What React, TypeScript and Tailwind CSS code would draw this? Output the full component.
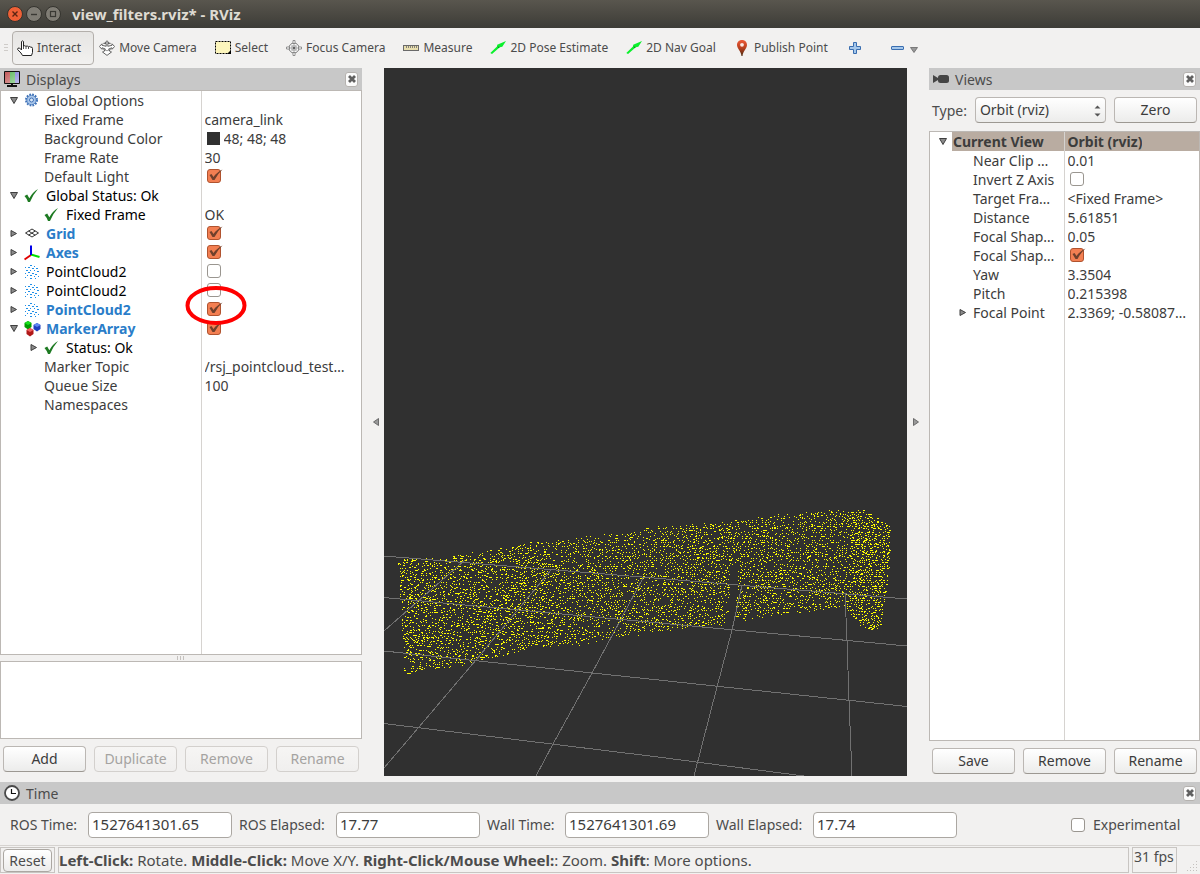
import { useState, type ReactNode } from "react";

/* ---------- icons ---------- */

function HandIcon() {
  return (
    <svg width="16" height="16" viewBox="0 0 16 16" className="shrink-0">
      <path
        d="M4.5 10V1.5Q5.5.2 6.5 1.5V6Q8 5.200 8.800 6.300Q10.500 5.500 11.300 6.800Q13 6 13.800 7.200Q15.500 6.800 15.500 8.500V12.500L14.500 15.500H5.500L4 13L.6 9.500Q.6 7.500 2.500 8Z"
        fill="#fff"
        stroke="#222"
      />
      <path d="M6.500 6V9M9 6.500V9M11.500 7V9" stroke="#222" strokeWidth=".8" />
    </svg>
  );
}

function MoveIcon() {
  return (
    <svg width="16" height="16" viewBox="0 0 16 16" fill="#fff" stroke="#555" strokeWidth=".9" className="shrink-0">
      <path d="M8 .7L10.500 3.500H8.800V6.300L13 5.300V3.800L15.600 6.500L13 9.300V7.800L9.600 9L11.400 12H12.500L8 15.400L3.500 12H4.600L6.400 9L3 7.800V9.300L.4 6.500L3 3.800V5.300L7.200 6.300V3.500H5.500Z" />
      <path d="M4 3.500Q8 1.500 12 3.500M4 9.500Q8 12 12 9.500" fill="none" strokeWidth=".6" />
    </svg>
  );
}

function SelectIcon() {
  return (
    <svg width="16" height="16" viewBox="0 0 16 16" className="shrink-0">
      <rect x=".5" y="1.500" width="15" height="12" fill="#fdf6bd" stroke="#000" strokeDasharray="2 1" />
      <path d="M16 10V14H12Z" fill="#000" />
    </svg>
  );
}

function FocusIcon() {
  return (
    <svg width="16" height="16" viewBox="0 0 16 16" fill="none" stroke="#7a7a7a" className="shrink-0">
      <circle cx="8" cy="8" r="5" fill="#f8f8f8" />
      <path d="M7 .5H9V3.500H7ZM7 12.500H9V15.500H7ZM.5 7V9H3.500V7ZM12.500 7V9H15.500V7Z" fill="#fff" strokeWidth=".8" />
      <path d="M3.500 8H12.500M8 3.500V12.500M5.500 6H10.500M5.500 10H10.500M6 5.500V10.500M10 5.500V10.500" strokeWidth=".6" />
      <circle cx="8" cy="8" r="1" fill="#444" stroke="none" />
    </svg>
  );
}

function RulerIcon() {
  return (
    <svg width="16" height="16" viewBox="0 0 16 16" className="shrink-0">
      <rect x=".5" y="5.500" width="15" height="5" fill="#e8deae" stroke="#6a6a6a" />
      <path d="M3.500 6V8M5.500 6V8M7.500 6V8M9.500 6V8M11.500 6V8M13.500 6V8" stroke="#6a6a6a" strokeWidth=".8" />
    </svg>
  );
}

function ArrowIcon() {
  return (
    <svg width="16" height="16" viewBox="0 0 16 16" className="shrink-0">
      <path d="M16 1L12.300 6.800L9.800 7.200L2 14L.3 13L7 6.400L7.200 4.800Z" fill="#0bf02c" />
      <path d="M7.400 6.400L9.800 6.900L8.600 8.100Z" fill="#067a18" />
    </svg>
  );
}

function PinIcon() {
  return (
    <svg width="16" height="16" viewBox="0 0 16 16" className="shrink-0">
      <defs>
        <linearGradient id="pin" x1="0" y1="0" x2="0" y2="1">
          <stop offset="0" stopColor="#ee5a38" />
          <stop offset=".5" stopColor="#b8401f" />
          <stop offset="1" stopColor="#4a2c10" />
        </linearGradient>
      </defs>
      <path d="M8 0C4.800 0 3 2.300 3 5C3 8.500 7 11 7.500 16H8.500C9 11 13 8.500 13 5C13 2.300 11.200 0 8 0Z" fill="url(#pin)" />
      <circle cx="8" cy="4.800" r="1.900" fill="#fbe9e4" />
    </svg>
  );
}

function PlusIcon() {
  return (
    <svg width="12" height="12" viewBox="0 0 12 12" className="shrink-0">
      <path d="M4.500.5H7.500V4.500H11.500V7.500H7.500V11.500H4.500V7.500H.5V4.500H4.500Z" fill="#a5c7ea" stroke="#3a6eb0" />
    </svg>
  );
}

function MinusIcon() {
  return (
    <svg width="13" height="12" viewBox="0 0 13 12" className="shrink-0">
      <rect x=".5" y="4.500" width="12" height="3" rx=".5" fill="#a5c7ea" stroke="#3a6eb0" />
    </svg>
  );
}

function MonitorIcon() {
  return (
    <svg width="16" height="16" viewBox="0 0 16 16" className="shrink-0">
      <defs>
        <linearGradient id="screen" x1="0" y1="0" x2="1" y2="1">
          <stop offset="0" stopColor="#fff" stopOpacity="0" />
          <stop offset="1" stopColor="#fff" stopOpacity=".5" />
        </linearGradient>
      </defs>
      <rect width="16" height="13" rx="1" fill="#111" />
      <path d="M1 1H6V12H1Z" fill="#c25a5a" />
      <path d="M6 1H11V12H6Z" fill="#5cb85c" />
      <path d="M11 1H15V12H11Z" fill="#7a78d8" />
      <path d="M1 1H15V12H1Z" fill="url(#screen)" />
      <path d="M7 13H9V14H13V16H3V14H7Z" fill="#111" />
    </svg>
  );
}

function CameraIcon() {
  return (
    <svg width="16" height="16" viewBox="0 0 16 16" fill="#444" className="shrink-0">
      <path d="M0 4L5 7V9L0 12Z" />
      <rect x="5" y="4" width="11" height="8" rx="2.500" />
    </svg>
  );
}

function ClockIcon() {
  return (
    <svg width="16" height="16" viewBox="0 0 16 16" fill="none" className="shrink-0">
      <circle cx="8" cy="8" r="7" fill="#fff" stroke="#4a4a4a" strokeWidth="1.800" />
      <path d="M7.500 4V8.500H12" stroke="#111" strokeWidth="1.200" />
    </svg>
  );
}

function GearIcon() {
  return (
    <svg width="16" height="16" viewBox="0 0 16 16" fill="none" className="shrink-0">
      <circle cx="7.500" cy="7" r="5.500" stroke="#3f72b8" strokeWidth="2" strokeDasharray="1.700 1.180" />
      <circle cx="7.500" cy="7" r="4.700" fill="#a9c6ea" stroke="#3f72b8" strokeWidth=".8" />
      <circle cx="7.500" cy="7" r="2" fill="#dbe8f7" stroke="#3f72b8" />
    </svg>
  );
}

function OkIcon() {
  return (
    <svg width="16" height="16" viewBox="0 0 16 16" className="shrink-0">
      <path d="M.5 8L3.200 6.500L5.300 10.200Q8.500 4.300 14 1Q9 6.500 6 14H4Q2.800 10.500 .5 8Z" fill="#1d7a22" />
    </svg>
  );
}

function GridIcon() {
  return (
    <svg width="16" height="16" viewBox="0 0 16 16" fill="none" stroke="#333" className="shrink-0">
      <path d="M1.500 7L8 3L14.500 7L8 11ZM4.500 5L11.200 9.200M4.500 9.200L11.200 5" />
    </svg>
  );
}

function AxesIcon() {
  return (
    <svg width="16" height="16" viewBox="0 0 16 16" fill="none" strokeWidth="2" className="shrink-0">
      <path d="M7 10L.5 14.500" stroke="#e00000" />
      <path d="M7 9.500L15.500 12" stroke="#00e000" />
      <path d="M7 10V.5" stroke="#0000e8" />
    </svg>
  );
}

function CloudIcon() {
  return (
    <svg width="16" height="16" viewBox="0 0 16 16" className="shrink-0" shapeRendering="crispEdges">
      <path
        d="M6 1.500h2M10 2.500h1M1 3.500h1M4 3.500h2M8 4.500h2M12 4.500h2M2 6.500h2M6 6.500h1M13 7.500h2M10 6.500h1M4 8.500h2M1 9.500h1M8 9.500h2M3 11.500h1M6 11.500h2M11 10.500h2M1 13.500h1M10 12.500h1M14 12.500h1M6 14.500h2M11 14.500h1"
        stroke="#1f8fe8"
        strokeWidth="1.500"
      />
    </svg>
  );
}

function MarkersIcon() {
  return (
    <svg width="18" height="16" viewBox="0 0 18 16" className="shrink-0">
      <path d="M4 0L7.500 2V6L4 8.500L.5 6V2Z" fill="#009c00" />
      <path d="M4 0L7.500 2L4 4L.5 2Z" fill="#19e01e" />
      <path d="M13 2L16.500 4V8L13 10.500L9.500 8V4Z" fill="#1f3fc0" />
      <path d="M13 2L16.500 4L13 6L9.500 4Z" fill="#5f86f2" />
      <path d="M6 7L9.500 9V13L6 15.500L2.500 13V9Z" fill="#b01818" />
      <path d="M6 7L9.500 9L6 11L2.500 9Z" fill="#f06060" />
    </svg>
  );
}

/* ---------- widgets ---------- */

function Arrow({ open }: { open: boolean }) {
  return (
    <svg width="8" height="8" viewBox="0 0 8 8" fill="#8a8a8a" stroke="#3f3f3f">
      {open ? <path d="M.5 .5H7.500L4 6.500Z" /> : <path d="M1 .5L6.500 3.500L1 6.500Z" />}
    </svg>
  );
}

function CheckBox({ id, label, checked }: { id: string; label: string; checked?: boolean }) {
  return (
    <span className="relative block size-[14px]">
      <input
        id={id}
        type="checkbox"
        aria-label={label}
        defaultChecked={checked}
        className="peer block size-[14px] appearance-none rounded-[3px] border border-[#9a9690] bg-white checked:border-[#b0532f] checked:bg-[#f37f52]"
      />
      <svg
        width="16"
        height="14"
        viewBox="0 0 16 14"
        fill="none"
        className="pointer-events-none absolute top-0 left-0 hidden peer-checked:block"
      >
        <path d="M2.500 6L4.500 5L6.500 8Q9.500 3.500 15.500 .5Q10.500 5 7.500 11H5.500Z" fill="#70402c" />
      </svg>
    </span>
  );
}

function Button({ children, disabled }: { children: ReactNode; disabled?: boolean }) {
  return (
    <button
      disabled={disabled}
      className="h-[26px] w-[83px] rounded-[4px] border border-[#bbb7b3] border-b-[#9c9892] bg-linear-to-b from-white to-[#ececeb] text-[14px] leading-5 text-[#3c3c3c] disabled:border-[#d3d0cd] disabled:from-[#f6f5f4] disabled:to-[#f0efee] disabled:text-[#a5a3a1]"
    >
      {children}
    </button>
  );
}

function DockHeader({ icon, title }: { icon: ReactNode; title: string }) {
  return (
    <header className="flex h-[22px] shrink-0 items-center gap-[6px] bg-[#c8c8c8] pr-1 pl-1">
      {icon}
      <h2 className="flex-1 pt-px text-[14px] leading-5 text-[#4c4c4c]">{title}</h2>
      <button
        aria-label={`Close ${title}`}
        className="flex h-[15px] w-[13px] items-center justify-center rounded-[3px] border border-[#b5b2af] bg-[#fbfbfb]"
      >
        <svg width="8" height="8" viewBox="0 0 8 8" stroke="#606060" strokeWidth="2.800">
          <path d="M1 1L7 7M7 1L1 7" />
        </svg>
      </button>
    </header>
  );
}

/* ---------- property trees ---------- */

type Row = {
  name: string;
  value?: string;
  check?: boolean;
  swatch?: boolean;
  icon?: ReactNode;
  open?: boolean;
  depth?: 0 | 1;
  tone?: "enabled" | "status";
  marked?: boolean;
  selected?: boolean;
};

const DISPLAYS: Row[] = [
  { name: "Global Options", icon: <GearIcon />, open: true },
  { name: "Fixed Frame", value: "camera_link", depth: 1 },
  { name: "Background Color", value: "48; 48; 48", swatch: true, depth: 1 },
  { name: "Frame Rate", value: "30", depth: 1 },
  { name: "Default Light", check: true, depth: 1 },
  { name: "Global Status: Ok", icon: <OkIcon />, open: true, tone: "status" },
  { name: "Fixed Frame", value: "OK", icon: <OkIcon />, depth: 1, tone: "status" },
  { name: "Grid", icon: <GridIcon />, open: false, check: true, tone: "enabled" },
  { name: "Axes", icon: <AxesIcon />, open: false, check: true, tone: "enabled" },
  { name: "PointCloud2", icon: <CloudIcon />, open: false, check: false, tone: "status" },
  { name: "PointCloud2", icon: <CloudIcon />, open: false, check: false, tone: "status" },
  { name: "PointCloud2", icon: <CloudIcon />, open: false, check: true, tone: "enabled", marked: true },
  { name: "MarkerArray", icon: <MarkersIcon />, open: true, check: true, tone: "enabled" },
  { name: "Status: Ok", icon: <OkIcon />, open: false, depth: 1, tone: "status" },
  { name: "Marker Topic", value: "/rsj_pointcloud_test…", depth: 1 },
  { name: "Queue Size", value: "100", depth: 1 },
  { name: "Namespaces", depth: 1 },
];

const VIEW: Row[] = [
  { name: "Current View", value: "Orbit (rviz)", open: true, selected: true },
  { name: "Near Clip …", value: "0.01", depth: 1 },
  { name: "Invert Z Axis", check: false, depth: 1 },
  { name: "Target Fra…", value: "<Fixed Frame>", depth: 1 },
  { name: "Distance", value: "5.61851", depth: 1 },
  { name: "Focal Shap…", value: "0.05", depth: 1 },
  { name: "Focal Shap…", check: true, depth: 1 },
  { name: "Yaw", value: "3.3504", depth: 1 },
  { name: "Pitch", value: "0.215398", depth: 1 },
  { name: "Focal Point", value: "2.3369; -0.58087…", open: false, depth: 1 },
];

function TreeRow({ row, id }: { row: Row; id: string }) {
  const tone =
    row.tone === "enabled"
      ? "font-bold text-[#2a7dc9]"
      : row.tone === "status"
        ? "text-black"
        : row.selected
          ? "font-bold text-[#3c3c3c]"
          : "text-[#3c3c3c]";

  return (
    <tr>
      <td className="h-[19px] p-0">
        <div className={row.depth ? "flex h-[19px] items-center pl-5" : "flex h-[19px] items-center"}>
          <span className="flex w-[22px] shrink-0 justify-center pl-[3px]">
            {row.open !== undefined && (
              <button aria-label={`Toggle ${row.name}`}>
                <Arrow open={row.open} />
              </button>
            )}
          </span>
          {row.icon && <span className="flex w-[22px] shrink-0 pl-px">{row.icon}</span>}
          <span
            className={`${tone} ${row.selected ? "bg-[#b9aca1]" : ""} h-[19px] flex-1 truncate pl-px`}
          >
            {row.name}
          </span>
        </div>
      </td>
      <td
        className={`${row.selected ? "bg-[#b9aca1] font-bold" : ""} relative h-[19px] border-l border-[#d6d3d0] p-0 pl-[3px]`}
      >
        {row.check !== undefined && (
          <div className="h-4 pl-[2px]">
            <CheckBox id={id} label={row.name} checked={row.check} />
          </div>
        )}
        {row.value && (
          <div className="flex h-[19px] items-center text-[#3c3c3c]">
            {row.swatch && <span className="mr-1 ml-[2px] size-[13px] shrink-0 bg-[#303030]" />}
            <span className="truncate">{row.value}</span>
          </div>
        )}
        {row.marked && (
          <svg
            width="62"
            height="41"
            viewBox="0 0 62 41"
            className="pointer-events-none absolute -top-[15px] -left-[17px] z-10"
          >
            <ellipse cx="31" cy="20.500" rx="28.500" ry="17.500" fill="none" stroke="#f00" strokeWidth="4" />
          </svg>
        )}
      </td>
    </tr>
  );
}

function Tree({ id, rows, wide }: { id: string; rows: Row[]; wide?: boolean }) {
  const col = wide ? "w-[200px]" : "w-[134px]";
  return (
    <div className="flex min-h-0 flex-1 flex-col border border-[#bcb8b4] bg-white text-[14px] leading-[19px]">
      <table className="w-full table-fixed border-collapse">
        <colgroup>
          <col className={col} />
          <col />
        </colgroup>
        <tbody>
          {rows.map((row, i) => (
            <TreeRow key={i} row={row} id={`${id}-${i}`} />
          ))}
        </tbody>
      </table>
      <div className="flex flex-1">
        <div className={`${col} shrink-0`} />
        <div className="border-l border-[#d6d3d0]" />
      </div>
    </div>
  );
}

/* ---------- 3D view ---------- */

const TOP: [number, number][] = [
  [14, 489], [56, 489], [76, 485], [106, 481], [136, 475], [176, 471], [216, 466], [246, 461],
  [296, 456], [336, 452], [376, 448], [416, 444], [464, 440], [480, 443], [506, 456],
];
const BOTTOM: [number, number][] = [
  [14, 500], [20, 608], [36, 602], [64, 600], [86, 595], [126, 587], [146, 581], [191, 577],
  [221, 571], [271, 565], [316, 560], [346, 556], [376, 550], [416, 545], [461, 540], [470, 554],
  [482, 562], [496, 562], [501, 527], [506, 484],
];

function edge(points: [number, number][], x: number) {
  for (let i = 1; i < points.length; i++) {
    const [x0, y0] = points[i - 1];
    const [x1, y1] = points[i];
    if (x <= x1) return y0 + ((y1 - y0) * (x - x0)) / (x1 - x0);
  }
  return points[points.length - 1][1];
}

// small seeded generator, so that the cloud is the same on every render
function buildCloud() {
  let seed = 7;
  const rand = () => {
    seed = (seed * 1664525 + 1013904223) % 4294967296;
    return seed / 4294967296;
  };
  let d = "";
  for (let x = 14; x < 506; x += 2) {
    const top = edge(TOP, x) + rand() * 3;
    const bottom = edge(BOTTOM, x) - rand() * 3;
    const dense = x > 464;
    const left = x < 180;
    const fill = dense ? 0.62 : left ? 0.46 : 0.44;
    for (let y = Math.round(top / 2) * 2; y < bottom; y += 2) {
      const center = 350 - (y - 500) / 14;
      if (y > 498 && Math.abs(x - center) < 4) continue;
      if (rand() > fill) continue;
      const jx = rand() < 0.4 ? 1 : 0;
      const jy = rand() < (left ? 0.5 : 0.3) ? 1 : 0;
      d += `M${x + jx} ${y + jy + 0.5}h${rand() < (left || dense ? 0.25 : 0.1) ? 2 : 1}`;
    }
  }
  return d;
}

const CLOUD = buildCloud();

function Viewport() {
  return (
    <main className="min-w-0 flex-1 bg-[#303030]">
      <svg viewBox="0 0 523 708" preserveAspectRatio="xMidYMax slice" className="block size-full" shapeRendering="crispEdges">
        <path d={CLOUD} stroke="#ff0" fill="none" />
        <path
          d="M0 488L270 510L523 531M0 529.500L270 554.500L523 578M0 583L270 611.500L523 638.500M0 655.500L270 688.500L420 708M0 563L81 492M0 700L35 659L92 592L167 502M152 708L169 676L208 605L259 510M310 708L333 619L348 562L358 517M461 526L463 572L465 632L468 708"
          fill="none"
          stroke="#717171"
        />
      </svg>
    </main>
  );
}

function Gutter({ side }: { side: "left" | "right" }) {
  return (
    <button aria-label={`Hide ${side} panels`} className="flex w-[22px] shrink-0 items-center justify-center">
      <svg width="6" height="8" viewBox="0 0 6 8" fill="#999" stroke="#555" strokeWidth=".8" className={side === "left" ? "ml-[6px]" : "mr-1"}>
        {side === "left" ? <path d="M5.500 .5V7.500L.5 4Z" /> : <path d="M.5 .5V7.500L5.500 4Z" />}
      </svg>
    </button>
  );
}

/* ---------- bars ---------- */

const TOOLS = [
  { name: "Interact", icon: <HandIcon /> },
  { name: "Move Camera", icon: <MoveIcon /> },
  { name: "Select", icon: <SelectIcon /> },
  { name: "Focus Camera", icon: <FocusIcon /> },
  { name: "Measure", icon: <RulerIcon /> },
  { name: "2D Pose Estimate", icon: <ArrowIcon /> },
  { name: "2D Nav Goal", icon: <ArrowIcon /> },
  { name: "Publish Point", icon: <PinIcon /> },
];

function Toolbar() {
  const [active, setActive] = useState("Interact");
  return (
    <nav className="flex h-10 shrink-0 items-center text-[12px] text-[#4c4c4c]">
      <svg width="12" height="8" viewBox="0 0 12 8" stroke="#cfccc9">
        <path d="M4 .5H8M4 3.500H8M4 6.500H8" />
      </svg>
      {TOOLS.map((tool) => (
        <button
          key={tool.name}
          onClick={() => setActive(tool.name)}
          className={`flex h-[34px] items-center gap-1 rounded-[4px] border pr-3 pl-1 whitespace-nowrap ${
            active === tool.name
              ? "border-[#b3afab] bg-linear-to-b from-[#e6e5e3] to-[#f2f1f0]"
              : "border-transparent"
          }`}
        >
          {tool.icon}
          {tool.name}
        </button>
      ))}
      <button aria-label="Add tool" className="px-2">
        <PlusIcon />
      </button>
      <button aria-label="Remove tool" className="ml-[22px] flex items-center gap-[6px]">
        <MinusIcon />
        <svg width="8" height="6" viewBox="0 0 8 6" fill="#999" stroke="#666" strokeWidth=".8" className="mt-1">
          <path d="M.5 .5H7.500L4 5.500Z" />
        </svg>
      </button>
    </nav>
  );
}

function TitleBar() {
  return (
    <div className="flex h-7 shrink-0 items-center gap-[3px] bg-linear-to-b from-[#59564e] to-[#3d3c37] pl-[7px]">
      <button aria-label="Close window">
        <svg width="16" height="16" viewBox="0 0 16 16" className="block">
          <circle cx="8" cy="8" r="7.500" fill="#ee6036" stroke="#34332e" />
          <path d="M5.500 5.500L10.500 10.500M10.500 5.500L5.500 10.500" stroke="#5a2412" strokeWidth="1.400" />
        </svg>
      </button>
      <button aria-label="Minimize window">
        <svg width="16" height="16" viewBox="0 0 16 16" className="block">
          <circle cx="8" cy="8" r="7.500" fill="#807d75" stroke="#34332e" />
          <path d="M5 8.500H11" stroke="#3a3934" strokeWidth="1.400" />
        </svg>
      </button>
      <button aria-label="Maximize window">
        <svg width="16" height="16" viewBox="0 0 16 16" className="block">
          <circle cx="8" cy="8" r="7.500" fill="#807d75" stroke="#34332e" />
          <rect x="5.500" y="5.500" width="5" height="5" fill="none" stroke="#3a3934" strokeWidth="1.200" />
        </svg>
      </button>
      <h1 className="ml-2 text-[15px] font-bold text-[#dfdbd2]">view_filters.rviz* - RViz</h1>
    </div>
  );
}

const CLOCKS = [
  { id: "ros-time", label: "ROS Time:", value: "1527641301.65", width: "w-[70px]" },
  { id: "ros-elapsed", label: "ROS Elapsed:", value: "17.77", width: "w-[89px]" },
  { id: "wall-time", label: "Wall Time:", value: "1527641301.69", width: "w-[70px]" },
  { id: "wall-elapsed", label: "Wall Elapsed:", value: "17.74", width: "w-[89px]" },
];

function TimePanel() {
  return (
    <section className="mt-[6px] shrink-0">
      <DockHeader icon={<ClockIcon />} title="Time" />
      <div className="flex h-[41px] items-center gap-[7px] pr-4 pl-[10px]">
        {CLOCKS.map((clock) => (
          <div key={clock.id} className="flex items-center gap-2">
            <label htmlFor={clock.id} className={`${clock.width} text-[14px] whitespace-nowrap`}>
              {clock.label}
            </label>
            <input
              id={clock.id}
              readOnly
              defaultValue={clock.value}
              className="h-[26px] w-36 rounded-[4px] border border-[#aba7a2] bg-white px-[3px] pb-[2px] text-[15px] text-[#3c3c3c]"
            />
          </div>
        ))}
        <div className="ml-auto flex items-center gap-2">
          <CheckBox id="experimental" label="Experimental" />
          <label htmlFor="experimental" className="w-[91px] text-[14px]">
            Experimental
          </label>
        </div>
      </div>
    </section>
  );
}

function StatusBar() {
  return (
    <footer className="flex h-[29px] shrink-0 items-start gap-[3px] border-t border-[#d6d3d0] pt-px text-[14px]">
      <div className="h-[26px] border border-[#c8c5c2] px-[2px] pt-px">
        <button className="block h-[23px] w-[49px] rounded-[4px] border border-[#aba7a2] bg-linear-to-b from-white to-[#ececeb] leading-[19px]">
          Reset
        </button>
      </div>
      <p className="h-[26px] flex-1 truncate border border-[#c8c5c2] text-[15px] leading-6">
        <b>Left-Click:</b> Rotate. <b>Middle-Click:</b> Move X/Y. <b>Right-Click/Mouse Wheel:</b>: Zoom. <b>Shift</b>: More options.
      </p>
      <div className="h-[26px] w-[45px] border border-[#c8c5c2] pl-px leading-[17px] whitespace-nowrap">31 fps</div>
      <svg width="20" height="26" viewBox="0 0 20 26" className="shrink-0" fill="#c4c1be">
        <path d="M16 14h1v1h-1zM13 17h1v1h-1zM16 17h1v1h-1zM10 20h1v1h-1zM13 20h1v1h-1zM16 20h1v1h-1zM7 23h1v1h-1zM10 23h1v1h-1zM13 23h1v1h-1zM16 23h1v1h-1z" />
      </svg>
    </footer>
  );
}

export default function App() {
  return (
    <div className="flex h-screen flex-col overflow-hidden bg-[#f2f1f0] font-['Noto_Sans',sans-serif] text-[14px] text-[#4c4c4c]">
      <TitleBar />
      <Toolbar />
      <div className="flex min-h-0 flex-1">
        <aside className="flex w-[362px] shrink-0 flex-col">
          <DockHeader icon={<MonitorIcon />} title="Displays" />
          <Tree id="display" rows={DISPLAYS} wide />
          <div className="flex h-[6px] shrink-0 items-center justify-center">
            <svg width="8" height="4" viewBox="0 0 8 4" stroke="#c4c1be">
              <path d="M.5 0V4M3.500 0V4M6.500 0V4" />
            </svg>
          </div>
          <div className="h-[78px] shrink-0 border border-[#bcb8b4] bg-white" />
          <div className="flex h-[37px] shrink-0 gap-2 pt-[7px] pl-[3px]">
            <Button>Add</Button>
            <Button disabled>Duplicate</Button>
            <Button disabled>Remove</Button>
            <Button disabled>Rename</Button>
          </div>
        </aside>
        <Gutter side="left" />
        <Viewport />
        <Gutter side="right" />
        <aside className="flex w-[271px] shrink-0 flex-col">
          <DockHeader icon={<CameraIcon />} title="Views" />
          <div className="flex h-[41px] shrink-0 items-center gap-2 px-[3px] pb-px">
            <label htmlFor="view-type">Type:</label>
            <div className="relative flex-1">
              <select
                id="view-type"
                className="block h-[26px] w-full appearance-none rounded-[4px] border border-[#bbb7b3] border-b-[#9c9892] bg-linear-to-b from-white to-[#ececeb] px-1 text-[14px] leading-5 text-[#3c3c3c]"
              >
                <option>Orbit (rviz)</option>
              </select>
              <svg width="7" height="12" viewBox="0 0 7 12" fill="#555" className="pointer-events-none absolute top-2 right-[5px]">
                <path d="M.5 3.500L3.500 .5L6.500 3.500ZM.5 8.500L3.500 11.500L6.500 8.500Z" />
              </svg>
            </div>
            <Button>Zero</Button>
          </div>
          <Tree id="view" rows={VIEW} />
          <div className="flex h-[35px] shrink-0 gap-2 pt-[7px] pl-[3px]">
            <Button>Save</Button>
            <Button>Remove</Button>
            <Button>Rename</Button>
          </div>
        </aside>
      </div>
      <TimePanel />
      <StatusBar />
    </div>
  );
}
